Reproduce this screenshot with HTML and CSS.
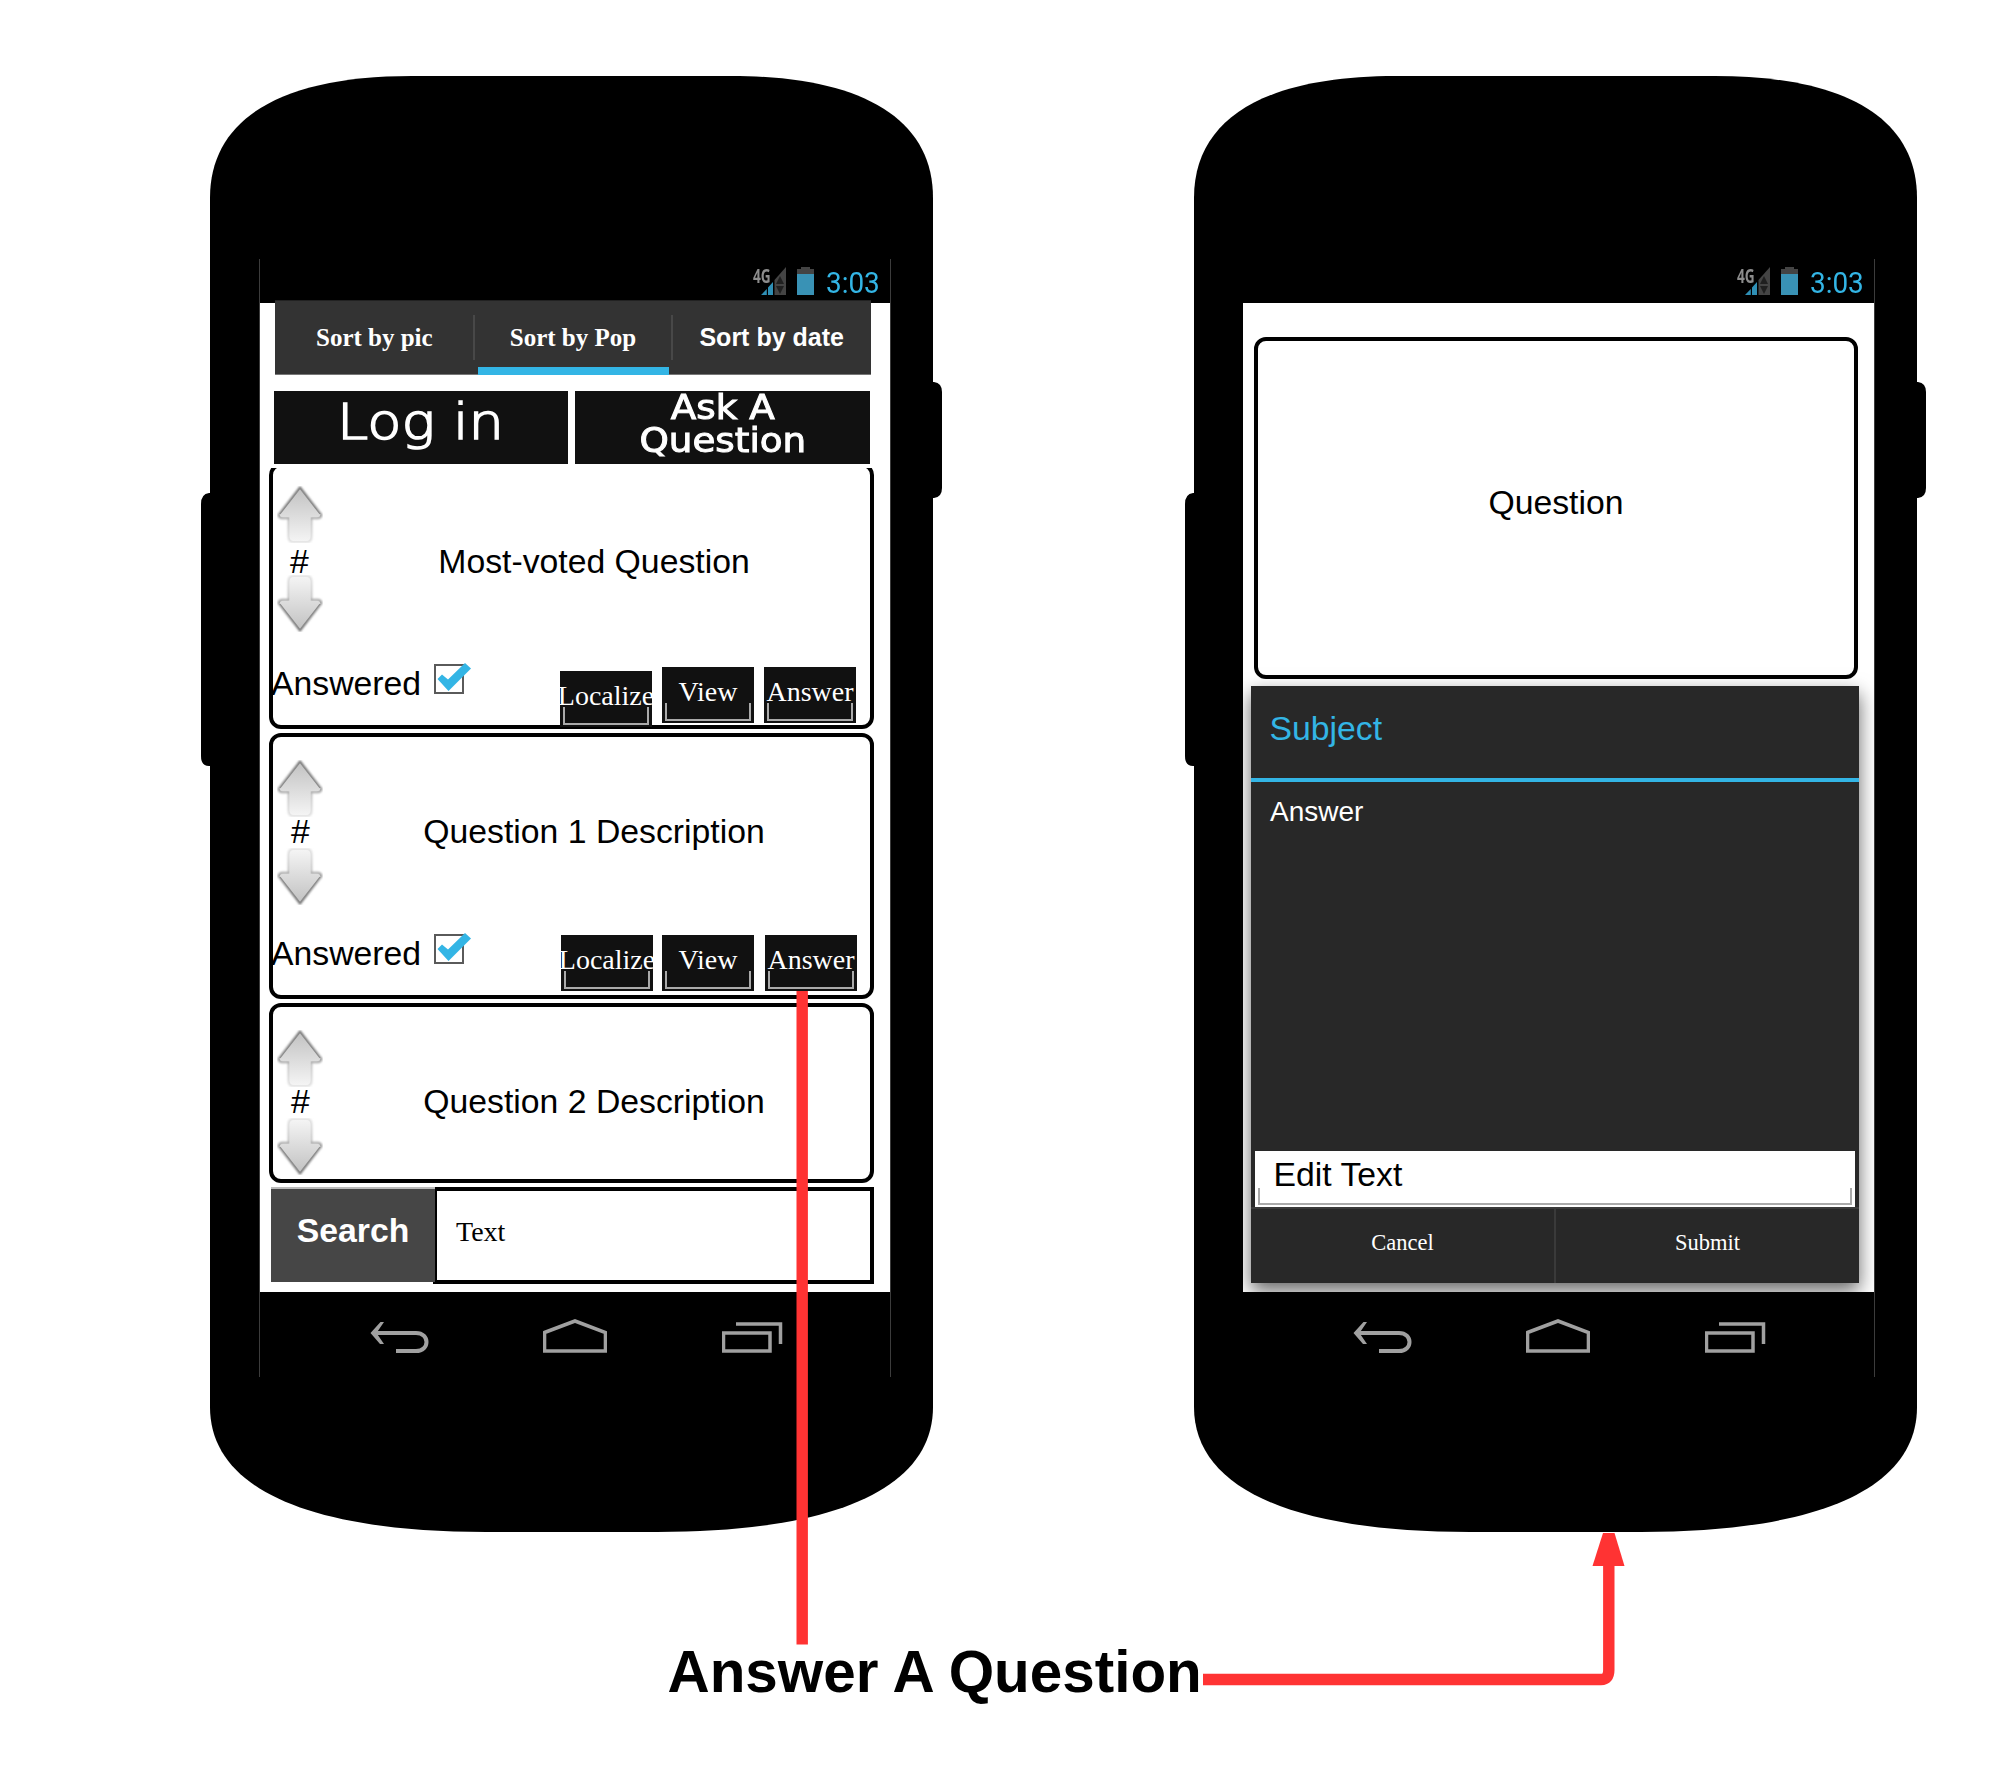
FILE: index.html
```html
<!DOCTYPE html>
<html lang="en">
<head>
<meta charset="utf-8">
<title>Answer A Question</title>
<link rel="stylesheet" href="styles.css">
</head>
<body>
<svg class="defs" width="0" height="0">
  <defs>
    <linearGradient id="fade" x1="0" y1="0" x2="0" y2="1">
      <stop offset="0" stop-color="#c2c2c2"/><stop offset="1" stop-color="#f4f4f4"/>
    </linearGradient>
    <linearGradient id="edge" x1="0" y1="0" x2="0" y2="1">
      <stop offset="0" stop-color="#666"/><stop offset=".5" stop-color="#888"/><stop offset=".6" stop-color="#bbb"/><stop offset="1" stop-color="#ddd"/>
    </linearGradient>
    <filter id="soft" x="-20%" y="-20%" width="140%" height="140%"><feGaussianBlur stdDeviation="1"/></filter>
    <symbol id="arrow" viewBox="0 0 46 57">
      <path d="M23 2 L44 29 Q43.500 32 41 32 H34 V51 Q34 55.500 30 55.500 H16 Q12 55.500 12 51 V32 H5 Q2.500 32 2 29 Z" fill="none" stroke="url(#edge)" stroke-width="2.600" filter="url(#soft)"/>
      <path d="M23 2.500 L43.500 28.500 Q43 31 41 31 H33.500 V50 Q33.500 55 29 55 H17 Q12.500 55 12.500 50 V31 H5 Q3 31 2.500 28.500 Z" fill="url(#fade)"/>
      <path d="M3 28 L23 2.500 L43 28" fill="none" stroke="#8c8c8c" stroke-width="1.200"/>
    </symbol>
    <symbol id="check" viewBox="0 0 38 33">
      <rect x="1" y="3" width="28" height="28" fill="#fff" stroke="#5a5a5a" stroke-width="2"/>
      <path d="M3.500 17 L8 12.500 L14 17.500 L31 1 L37 6.500 L14.500 29 Z" fill="#33b5e5"/>
    </symbol>
    <symbol id="shell" viewBox="0 0 741 1456">
      <path d="M9 122 C9 42 81 0 211 0 H530 C660 0 732 42 732 122 V1331 C732 1411 637 1456 456 1456 H285 C104 1456 9 1411 9 1331 Z"/>
      <path d="M9 417 H8 Q0 418 0 428 V680 Q0 690 8 690 H9 Z M732 306 H733 Q741 307 741 316 V412 Q741 421 733 422 H732 Z"/>
    </symbol>
    <symbol id="signal" viewBox="0 0 25 28">
      <path d="M25 0 V28 H13.500 V13 Z" fill="#444"/>
      <path d="M12 15 V28 H7 V20.500 Z M5.800 22 V28 H0 Z" fill="#2f8fb5"/>
      <path d="M19 9 L23 17 H15 Z M15 19 H23 L19 27 Z" fill="#1f1f1f"/>
    </symbol>
    <symbol id="battery" viewBox="0 0 17 28">
      <path d="M4 0 H13 V2 H17 V7 H0 V2 H4 Z" fill="#444"/>
      <rect y="7" width="17" height="21" fill="#3992b5"/>
    </symbol>
    <symbol id="back" viewBox="0 0 60 34">
      <path d="M10.500 3 L14 3 L6.500 14 L14 25 H10 L.5 14 Z" fill="#a0a0a0"/>
      <path d="M3 14 H46 C60 14 60 32 46 32 H26" fill="none" stroke="#a0a0a0" stroke-width="4"/>
    </symbol>
    <symbol id="home" viewBox="0 0 64 34">
      <path d="M1.500 13.500 L32 2 L62.500 13.500 V32 H1.500 Z" fill="none" stroke="#a0a0a0" stroke-width="3.600"/>
    </symbol>
    <symbol id="recent" viewBox="0 0 61 34">
      <path d="M1.500 14 H48 V32 H1.500 Z M14 5 H58.500 V25" fill="none" stroke="#a0a0a0" stroke-width="3.500"/>
    </symbol>
  </defs>
</svg>

<main class="canvas">
  <section class="phone phone-list">
    <svg class="shell"><use href="#shell"/></svg>
    <div class="screen">
      <header class="status">
        <span class="net">4G</span><svg class="signal"><use href="#signal"/></svg><svg class="battery"><use href="#battery"/></svg><span class="clock">3:03</span>
      </header>
      <div class="content">
        <nav class="tabs">
          <span class="tab">Sort by pic</span>
          <span class="tab active">Sort by Pop</span>
          <span class="tab sans">Sort by date</span>
        </nav>
        <div class="actions">
          <button class="action login"><span>Log in</span></button>
          <button class="action ask"><span>Ask A<br>Question</span></button>
        </div>
        <div class="list">
          <article class="card first">
            <div class="row">
              <div class="vote"><svg><use href="#arrow"/></svg><span>#</span><svg class="down"><use href="#arrow"/></svg></div>
              <h2>Most-voted Question</h2>
            </div>
            <footer><span class="answered">Answered</span><svg class="check"><use href="#check"/></svg>
              <div class="buttons"><button class="low">Localize</button><button>View</button><button>Answer</button></div>
            </footer>
          </article>
          <article class="card">
            <div class="row">
              <div class="vote"><svg><use href="#arrow"/></svg><span>#</span><svg class="down"><use href="#arrow"/></svg></div>
              <h2>Question 1 Description</h2>
            </div>
            <footer><span class="answered">Answered</span><svg class="check"><use href="#check"/></svg>
              <div class="buttons wide"><button>Localize</button><button>View</button><button>Answer</button></div>
            </footer>
          </article>
          <article class="card short">
            <div class="row">
              <div class="vote"><svg><use href="#arrow"/></svg><span>#</span><svg class="down"><use href="#arrow"/></svg></div>
              <h2>Question 2 Description</h2>
            </div>
          </article>
        </div>
        <div class="search"><button class="search-button">Search</button><div class="search-field">Text</div></div>
      </div>
      <nav class="softkeys"><svg class="back"><use href="#back"/></svg><svg class="home"><use href="#home"/></svg><svg class="recent"><use href="#recent"/></svg></nav>
    </div>
  </section>

  <section class="phone phone-answer">
    <svg class="shell"><use href="#shell"/></svg>
    <div class="screen">
      <header class="status">
        <span class="net">4G</span><svg class="signal"><use href="#signal"/></svg><svg class="battery"><use href="#battery"/></svg><span class="clock">3:03</span>
      </header>
      <div class="content">
        <article class="card question">Question</article>
        <div class="dialog">
          <h3>Subject</h3>
          <p>Answer</p>
          <div class="edit">Edit Text</div>
          <div class="choices"><button>Cancel</button><button>Submit</button></div>
        </div>
      </div>
      <nav class="softkeys"><svg class="back"><use href="#back"/></svg><svg class="home"><use href="#home"/></svg><svg class="recent"><use href="#recent"/></svg></nav>
    </div>
  </section>

  <svg class="links" viewBox="0 0 2001 1791">
    <path d="M802.200 991 V1644.500 M1203 1679.500 H1601 Q1608.800 1679.500 1608.800 1670 V1560" fill="none" stroke="#f33" stroke-width="11.400"/>
    <path d="M1603 1533 H1614.500 L1624.500 1566 H1592.500 Z" fill="#f33"/>
  </svg>
  <h1 class="caption">Answer A Question</h1>
</main>
</body>
</html>
```

FILE: styles.css
```css
* { box-sizing: border-box; margin: 0; }
body { background: #fff; font-family: "Liberation Sans", Arial, sans-serif; color: #000; }
button { border: 0; padding: 0; border-radius: 0; font: inherit; color: #fff; display: block; }
svg { display: block; flex: none; }
h1, h2, h3 { font-weight: 400; }
.defs { position: absolute; }

.canvas { position: relative; width: 2001px; height: 1791px; overflow: hidden; }
.phone { position: absolute; top: 76px; width: 723px; height: 1456px; padding: 183px 0 0 49px; }
.phone-list { left: 210px; }
.phone-answer { left: 1193px; }
.shell { position: absolute; left: -9px; top: 0; width: 741px; height: 1456px; }
.phone-answer .shell { left: -8.500px; }
.screen { position: relative; width: 632px; height: 1118px; display: flex; flex-direction: column; background: #000; border: solid #3c3c3c; border-width: 0 1px; }
.phone-answer .screen { width: 633px; border-left-color: #000; }

.status { height: 44px; display: flex; align-items: flex-start; justify-content: flex-end; padding: 8px 10px 0 0; flex: none; }
.net { font: 700 19px/18px "Open Sans", sans-serif; color: #8c8c8c; width: 18px; transform: scaleX(.72); transform-origin: 0 0; margin-right: -10px; white-space: nowrap; }
.signal { width: 25px; height: 28px; margin-right: 11px; }
.battery { width: 17px; height: 28px; margin-right: 12px; }
.clock { width: 54px; font: 400 30px/30px Roboto, sans-serif; color: #33b5e5; margin-top: 1px; transform: scaleX(.93); transform-origin: 0 0; white-space: nowrap; }

.content { height: 989px; background: #fff; flex: none; overflow: visible; }
.phone-answer .content { overflow: hidden; }

.tabs { position: relative; display: flex; width: 596px; height: 75px; margin: -3px 0 0 15px; background: #333; border-bottom: 1px solid #777; border-top: 1px solid #222; }
.tab { position: relative; flex: 1; text-align: center; color: #fff; font: 700 25px/73px "Liberation Serif", "Times New Roman", serif; }
.tab.sans { font-family: "Liberation Sans", Arial, sans-serif; }
.tab + .tab::before { content: ""; position: absolute; left: -1px; top: 14px; width: 2px; height: 45px; background: #484848; }
.tab.active::after { content: ""; position: absolute; left: 4px; right: 3px; top: 66px; height: 8px; background: #33b5e5; }

.actions { display: flex; gap: 7px; margin: 16px 0 0 14px; }
.action { height: 73px; background: #111; font-family: "DejaVu Sans", sans-serif; }
.action span { display: inline-block; transform: scaleX(1.13); }
.login { width: 294px; font-size: 50px; font-weight: 200; line-height: 63px; padding-bottom: 10px; -webkit-text-stroke: 1.600px #fff; }
.login span { transform: scaleX(1.12); }
.ask { width: 295px; font-size: 33px; line-height: 33.300px; padding-bottom: 7px; -webkit-text-stroke: 1px #fff; }

.list { display: flex; flex-direction: column; gap: 4px; margin: 4px 0 0 9px; width: 606px; height: 715px; overflow: hidden; }
.card { flex: none; width: 605px; height: 266px; display: flex; flex-direction: column; border: 4px solid #000; border-radius: 12px; background: #fff; font-size: 33.750px; }
.card.first { margin-top: -5px; }
.card.short { height: 180px; }
.row { display: flex; align-items: flex-start; }
.vote { width: 46px; margin-left: 3.500px; padding-top: 23px; display: flex; flex-direction: column; align-items: center; }
.vote svg { width: 46px; height: 57px; }
.vote span { line-height: 28px; margin: 0 0 3px; padding-left: 2px; }
.vote .down { transform: scaleY(-1); }
.first .vote { padding-top: 19px; }
.first .vote span { line-height: 36px; margin-bottom: -4px; padding: 0; }
h2 { flex: 1; font-size: 33.750px; line-height: 40px; text-align: center; margin-top: 74px; padding-right: 4.500px; }
.card footer { display: flex; align-items: flex-start; height: 62px; margin-top: auto; padding-right: 14px; }
.answered { line-height: 40px; width: 163px; margin-left: -2px; }
.check { width: 38px; height: 33px; margin-top: -1px; }
.buttons { display: flex; gap: 10px; margin-left: auto; padding-top: 2px; }
.buttons.wide { margin-right: -1px; }
.wide button:nth-child(2) { left: -1px; }
.first .buttons { padding-top: 4px; }
.first .low { position: relative; top: 4px; }
.buttons button { position: relative; width: 92px; height: 56px; background: #111; font: 28px/50px "Liberation Serif", "Times New Roman", serif; padding-bottom: 6px; display: flex; justify-content: center; }
.buttons button::after { content: ""; position: absolute; left: 3px; right: 3px; bottom: 2px; height: 16px; border: 2px solid #aaa; border-top: 0; }

.search { display: flex; margin: 4px 0 0 11px; }
.search-button { position: relative; width: 164px; height: 95px; background: #464646; border-top: 2px solid #bbb; font-size: 33.750px; font-weight: 700; line-height: 82px; padding-bottom: 11px; }
.search-field { width: 441px; height: 97px; margin-left: -2px; border: 4px solid #000; padding-left: 19px; font: 28px/82px "Liberation Serif", "Times New Roman", serif; }

.softkeys { flex: 1; display: flex; align-items: flex-start; padding: 27px 0 0 110px; }
.back { width: 60px; height: 34px; margin-right: 113px; }
.home { width: 64px; height: 34px; margin-right: 115px; }
.recent { width: 61px; height: 34px; }

.card.question { width: 604px; height: 342px; margin: 34px 0 0 11px; text-align: center; line-height: 323px; }
.dialog { width: 608px; height: 597px; margin: 7px 0 0 8px; display: flex; flex-direction: column; background: #282828; box-shadow: 0 8px 18px rgba(0, 0, 0, .6); }
h3 { height: 96px; border-bottom: 4px solid #33b5e5; color: #33b5e5; font-size: 33.750px; line-height: 84px; padding-left: 18.500px; }
.dialog p { flex: 1; color: #fff; font-size: 28px; line-height: 60px; padding-left: 19px; }
.edit { position: relative; height: 56px; margin: 0 4px; background: #fff; font-size: 33.750px; line-height: 47px; padding-left: 18.500px; }
.edit::after { content: ""; position: absolute; left: 3px; right: 3px; bottom: 2px; height: 15px; border: 2px solid #aaa; border-top: 0; }
.choices { display: flex; height: 76px; border-top: 2px solid #3a3a3a; }
.choices button { flex: 1; background: none; font: 22.500px/68px "Liberation Serif", "Times New Roman", serif; padding-bottom: 6px; }
.choices button + button { border-left: 2px solid #3a3a3a; }

.links { position: absolute; left: 0; top: 0; width: 2001px; height: 1791px; }
.caption { position: absolute; left: 667.500px; top: 1638px; font-size: 58.400px; line-height: 68px; font-weight: 700; white-space: nowrap; }
```
